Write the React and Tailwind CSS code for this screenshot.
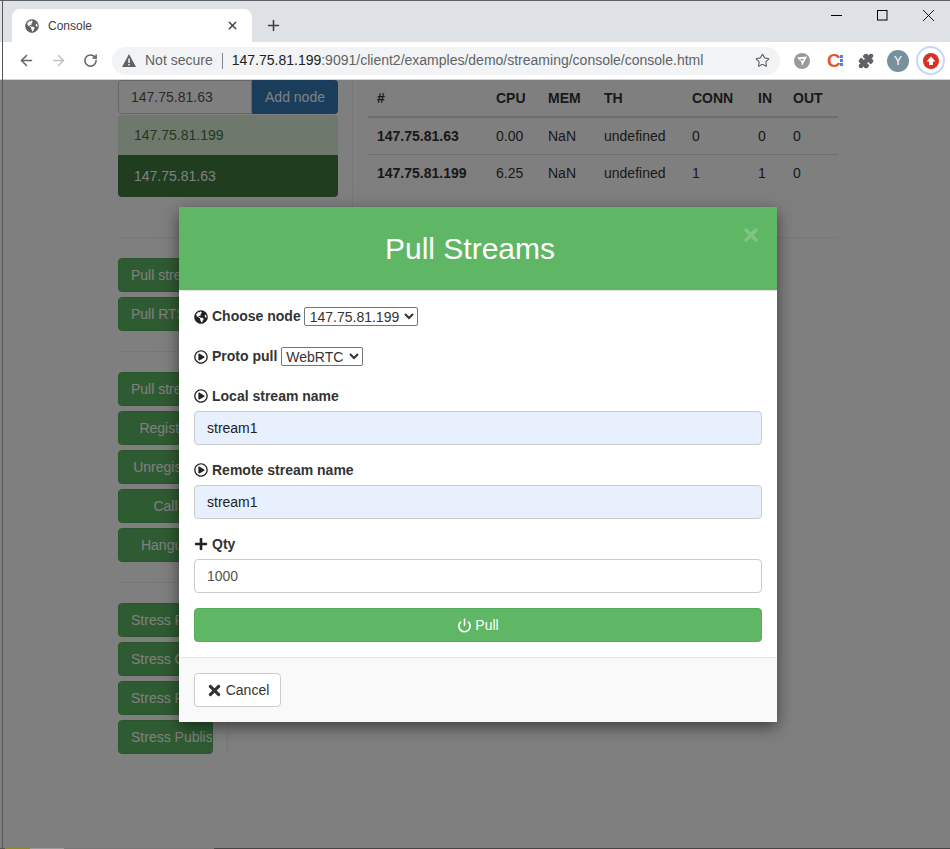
import { FaGlobeAmericas, FaRegPlayCircle, FaPlus, FaTimes } from "react-icons/fa";
import { ArrowLeft, ArrowRight, RotateCw, Star, Power, X, Plus, Puzzle } from "lucide-react";

const nodes = [
  { ip: "147.75.81.63", cpu: "0.00", conn: 0, inn: 0, out: 0 },
  { ip: "147.75.81.199", cpu: "6.25", conn: 1, inn: 1, out: 0 },
];

function SideButton({ children, center }) {
  return (
    <button
      className={`block w-[95px] h-[34px] mb-[5px] overflow-hidden whitespace-nowrap rounded bg-[#5fb665] border border-[#52ad58] text-white text-[14px] ${
        center ? "text-center" : "text-left pl-3"
      }`}
    >
      {children}
    </button>
  );
}

function WindowControls() {
  return (
    <div className="ml-auto self-start flex items-center mt-[9px] mr-[16px]">
      <svg viewBox="0 0 11 11" className="w-[11px] h-[11px]" stroke="#000" strokeWidth="1" fill="none">
        <path d="M0 5.5 H11" />
      </svg>
      <svg viewBox="0 0 11 11" className="ml-[35px] w-[11px] h-[11px]" stroke="#000" strokeWidth="1" fill="none">
        <rect x="0.5" y="0.5" width="9.5" height="9.5" />
      </svg>
      <svg viewBox="0 0 11 11" className="ml-[35px] w-[11px] h-[11px]" stroke="#000" strokeWidth="0.9" fill="none">
        <path d="M0 0 L11 11 M11 0 L0 11" />
      </svg>
    </div>
  );
}

function Browser() {
  return (
    <div className="h-20 shrink-0 bg-[#dee1e6] border-t border-[#5f6368] flex flex-col">
      <div className="h-[41px] flex items-end pl-3">
        <div className="w-[240px] h-[33px] bg-white rounded-t-lg flex items-center pl-[13px] pr-[13px] text-[#3c4043] text-[12px]">
          <FaGlobeAmericas className="text-[14px] text-[#5f6368]" />
          <span className="ml-[9px] flex-1">Console</span>
          <X size={13} strokeWidth={2.5} className="text-[#3c4043]" />
        </div>
        <Plus size={17} strokeWidth={2.2} className="ml-[13px] mb-[8px] text-[#3c4043]" />
        <WindowControls />
      </div>
      <div className="h-[38px] bg-white flex items-center pl-[18px] border-b border-[#d0d2d5]">
        <ArrowLeft size={17} strokeWidth={2.2} className="text-[#5f6368]" />
        <ArrowRight size={17} strokeWidth={2} className="ml-[15px] text-[#bdc1c6]" />
        <RotateCw size={15} strokeWidth={2.4} className="ml-[16px] text-[#5f6368]" />
        <div className="ml-[14px] w-[668px] h-[28px] rounded-full bg-[#f1f3f4] flex items-center pl-[10px] pr-[10px] text-[14px] text-[#5f6368] whitespace-nowrap">
          <svg viewBox="0 0 14 13" className="w-[14px] h-[13px]">
            <path d="M7 0 L14 13 H0 Z" fill="#5f6368" />
            <path d="M6.3 4.5 H7.7 V9 H6.3 Z M6.3 10 H7.7 V11.4 H6.3 Z" fill="#fff" />
          </svg>
          <span className="ml-[9px]">Not secure</span>
          <span className="mx-[9px] h-[16px] w-px bg-[#80868b]" />
          <span className="text-[#202124]">147.75.81.199</span>
          <span>:9091/client2/examples/demo/streaming/console/console.html</span>
          <Star size={15} strokeWidth={1.8} className="ml-auto text-[#5f6368]" />
        </div>
        <svg viewBox="0 0 16 16" className="ml-[14px] w-4 h-4">
          <circle cx="8" cy="8" r="8" fill="#9a9a9a" />
          <path d="M3 4.5 L13 3.5 L8 13 L7.5 9 Z" fill="#fff" />
          <path d="M5.5 6.5 L10.5 5.5 L8 8 Z" fill="#9a9a9a" />
        </svg>
        <span className="ml-[17px] w-[14px] flex items-center">
          <span className="text-[#e8542a] text-[19px] font-bold leading-none">C</span>
          <span className="flex flex-col gap-[1px] ml-[-1px]">
            <span className="w-[3px] h-[3px] bg-[#4285f4]" />
            <span className="w-[3px] h-[3px] bg-[#4285f4]" />
            <span className="w-[3px] h-[3px] bg-[#4285f4]" />
          </span>
        </span>
        <Puzzle size={16} fill="#5f6368" className="ml-[17px] text-[#5f6368]" />
        <span className="ml-[13px] w-[22px] h-[22px] rounded-full bg-[#78909c] text-white text-[12px] flex items-center justify-center">
          Y
        </span>
        <span className="ml-[7px] w-[29px] h-[29px] rounded-full border-2 border-[#c6d8f5] flex items-center justify-center">
          <svg viewBox="0 0 16 16" className="w-4 h-4">
            <circle cx="8" cy="8" r="8" fill="#d93025" />
            <path d="M8 3.5 L12.5 8.5 H10 V12 H6 V8.5 H3.5 Z" fill="#fff" />
          </svg>
        </span>
      </div>
    </div>
  );
}

function NodeTable() {
  return (
    <table className="w-[470px] text-[14px] text-[#333] border-collapse table-fixed">
      <thead>
        <tr className="h-[37px] border-b-2 border-[#ddd] text-left font-bold">
          <th className="w-[128px] pl-[9px]">#</th>
          <th className="w-[52px]">CPU</th>
          <th className="w-[56px]">MEM</th>
          <th className="w-[88px]">TH</th>
          <th className="w-[66px]">CONN</th>
          <th className="w-[35px]">IN</th>
          <th>OUT</th>
        </tr>
      </thead>
      <tbody>
        {nodes.map((n) => (
          <tr key={n.ip} className="h-[37px] border-b border-[#ddd] last:border-b-0">
            <td className="pl-[9px] pt-px font-bold">{n.ip}</td>
            <td className="pt-px">{n.cpu}</td>
            <td className="pt-px">NaN</td>
            <td className="pt-px">undefined</td>
            <td className="pt-px">{n.conn}</td>
            <td className="pt-px">{n.inn}</td>
            <td className="pt-px">{n.out}</td>
          </tr>
        ))}
      </tbody>
    </table>
  );
}

function Page() {
  return (
    <div className="flex-1 pl-[118px] pr-[112px] bg-white text-[14px] overflow-hidden">
      <div className="flex h-[157px]">
        <div className="w-[235px] border-r border-[#eee] pr-[14px]">
          <div className="flex h-[34px]">
            <input
              readOnly
              value="147.75.81.63"
              className="w-[134px] px-3 border border-[#ccc] rounded-l text-[#555] text-[14px] outline-none"
            />
            <button className="flex-1 bg-[#337ab7] rounded-r text-white text-[14px]">Add node</button>
          </div>
          <div className="mt-px rounded overflow-hidden">
            <div className="h-10 bg-[#dff0d8] text-[#3c763d] pl-4 flex items-center">147.75.81.199</div>
            <div className="h-[42px] bg-[#427a40] text-white pl-4 flex items-center">147.75.81.63</div>
          </div>
        </div>
        <div className="pl-[15px]">
          <NodeTable />
        </div>
      </div>
      <div className="h-px bg-[#eee]" />
      <div className="flex mt-5">
        <div className="w-[110px] border-r border-[#eee] h-[496px]">
          <SideButton>Pull streams</SideButton>
          <SideButton>Pull RTSP</SideButton>
          <div className="h-px bg-[#eee] w-[235px] mt-5 mb-5" />
          <SideButton>Pull stream</SideButton>
          <SideButton center>Register</SideButton>
          <SideButton center>Unregister</SideButton>
          <SideButton center>Call</SideButton>
          <SideButton center>Hangup</SideButton>
          <div className="h-px bg-[#eee] w-[235px] mt-5 mb-5" />
          <SideButton>Stress Pull</SideButton>
          <SideButton>Stress Call</SideButton>
          <SideButton>Stress Play</SideButton>
          <SideButton>Stress Publish</SideButton>
        </div>
      </div>
    </div>
  );
}

function Label({ icon, children }) {
  return (
    <span className="font-bold text-[14px] text-[#333] inline-flex items-center">
      {icon}
      <span className="ml-[4px]">{children}</span>
    </span>
  );
}

const playIcon = <FaRegPlayCircle className="text-[14px] text-[#222]" />;

function Modal() {
  return (
    <div className="absolute left-[179px] top-[207px] w-[598px] h-[515px] bg-white shadow-[0_5px_15px_rgba(0,0,0,0.5)] text-[14px] text-[#333]">
      <div className="relative h-[84px] bg-[#5fb665] border-b border-[#e5e5e5] text-white text-center">
        <h4 className="pt-[25px] pr-[16px] text-[30px] leading-[33px]">Pull Streams</h4>
        <FaTimes className="absolute right-[16px] top-[18px] text-[20px] text-white/20" />
      </div>
      <div className="px-[15px] pt-[15px]">
        <div className="flex items-center h-[21px]">
          <Label icon={<FaGlobeAmericas className="text-[14px] text-[#222]" />}>Choose node</Label>
          <select className="ml-[3px] h-[19px] w-[114px] pl-px border border-[#767676] rounded-[2px] text-[14px] bg-white">
            <option>147.75.81.199</option>
          </select>
        </div>
        <div className="flex items-center h-[21px] mt-[19px]">
          <Label icon={playIcon}>Proto pull</Label>
          <select className="ml-[4px] h-[19px] w-[82px] border border-[#767676] rounded-[2px] text-[14px] bg-white">
            <option>WebRTC</option>
          </select>
        </div>
        <div className="mt-[19px] h-[20px] flex items-center">
          <Label icon={playIcon}>Local stream name</Label>
        </div>
        <input
          readOnly
          value="stream1"
          className="mt-[5px] block w-full h-[34px] px-3 rounded border border-[#ccc] bg-[#e8f0fe] text-[14px] text-[#222] outline-none"
        />
        <div className="mt-[15px] h-[20px] flex items-center">
          <Label icon={playIcon}>Remote stream name</Label>
        </div>
        <input
          readOnly
          value="stream1"
          className="mt-[5px] block w-full h-[34px] px-3 rounded border border-[#ccc] bg-[#e8f0fe] text-[14px] text-[#222] outline-none"
        />
        <div className="mt-[15px] h-[20px] flex items-center">
          <Label icon={<FaPlus className="text-[14px] text-[#222]" />}>Qty</Label>
        </div>
        <input
          readOnly
          value="1000"
          className="mt-[5px] block w-full h-[34px] px-3 rounded border border-[#ccc] bg-white text-[14px] text-[#555] outline-none"
        />
        <button className="mt-[15px] w-full h-[34px] rounded bg-[#5fb665] border border-[#52ad58] text-white flex items-center justify-center">
          <Power size={15} strokeWidth={2.5} />
          <span className="ml-[3px]">Pull</span>
        </button>
      </div>
      <div className="mt-[15px] h-[65px] bg-[#f9f9f9] border-t border-[#e5e5e5] px-[15px] pt-[15px]">
        <button className="w-[87px] h-[34px] rounded border border-[#ccc] bg-white text-[#333] flex items-center justify-center">
          <FaTimes className="text-[17px]" />
          <span className="ml-[3px]">Cancel</span>
        </button>
      </div>
    </div>
  );
}

export default function App() {
  return (
    <div className="relative w-[950px] h-[849px] overflow-hidden flex flex-col font-['Liberation_Sans',Arial,sans-serif]">
      <Browser />
      <Page />
      <div className="absolute left-0 right-0 top-20 bottom-0 bg-black/50" />
      <Modal />
      {/* window edge of the screenshot */}
      <div className="absolute left-[2px] top-0 bottom-0 w-px bg-[#555]" />
      <div className="absolute left-0 right-0 bottom-0 h-px flex">
        <div className="w-[5px] bg-[#555]" />
        <div className="w-[25px] bg-[#8a8a20]" />
        <div className="w-[34px] bg-[#999]" />
        <div className="w-[150px] bg-[#777]" />
        <div className="flex-1 bg-[#444]" />
      </div>
    </div>
  );
}
